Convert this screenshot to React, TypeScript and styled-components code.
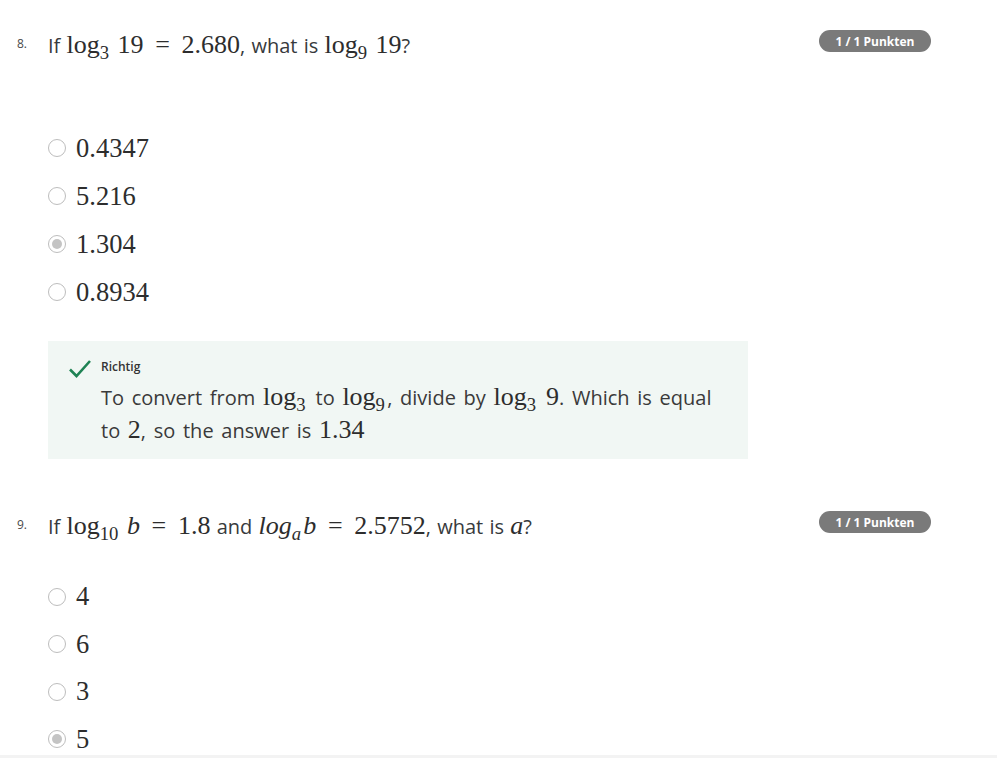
import styled, { createGlobalStyle } from "styled-components";

const GlobalStyle = createGlobalStyle`
  body {
    margin: 0;
    background: #ffffff;
    font-family: "Open Sans", "Liberation Sans", sans-serif;
    color: #373a3c;
  }
`;

const Page = styled.div`
  display: flex;
  flex-direction: column;
  height: 758px;
  padding-right: 66px;
  border-bottom: 3px solid #f3f3f3;
  box-sizing: border-box;
  overflow: hidden;
`;

const Question = styled.section<{ $top: number }>`
  display: grid;
  grid-template-columns: 31px 1fr auto;
  margin-top: ${(p) => p.$top}px;
  padding-left: 17px;
`;

const Number = styled.span`
  font-size: 12px;
  color: #4a4a4a;
  padding-top: 5px;
`;

const Body = styled.div`
  display: flex;
  flex-direction: column;
`;

const Prompt = styled.div`
  font-size: 20px;
  line-height: 30px;
  height: 30px;
  white-space: nowrap;
  word-spacing: 1px;
`;

const Badge = styled.span`
  display: inline-flex;
  align-items: center;
  justify-content: center;
  width: 112px;
  height: 22px;
  border-radius: 11px;
  background: #7a7a7a;
  color: #ffffff;
  font-size: 12px;
  font-weight: 700;
`;

const Options = styled.ul<{ $top: number }>`
  list-style: none;
  margin: ${(p) => p.$top}px 0 0;
  padding: 0;
  display: flex;
  flex-direction: column;
`;

const Option = styled.li<{ $h: number }>`
  display: flex;
  align-items: center;
  height: ${(p) => p.$h}px;
  gap: 10px;
`;

const Radio = styled.span<{ $checked?: boolean }>`
  width: 16px;
  height: 16px;
  border-radius: 50%;
  border: 1.5px solid #bdbdbd;
  display: inline-flex;
  align-items: center;
  justify-content: center;
  flex-shrink: 0;
  &::after {
    content: "";
    width: 10px;
    height: 10px;
    border-radius: 50%;
    background: ${(p) => (p.$checked ? "#c4c4c4" : "transparent")};
  }
`;

const M = styled.span`
  font-family: "Liberation Serif", "DejaVu Serif", serif;
  font-size: 1.3em;
  font-style: normal;
  color: #2d2d2d;
  word-spacing: 0;
`;

const MI = styled.i`
  font-family: "Liberation Serif", serif;
`;

const Rel = styled.span`
  margin: 0 0.2em;
`;

const Sub = styled.sub`
  font-size: 0.72em;
  vertical-align: -0.3em;
  line-height: 0;
  margin-right: 0.12em;
`;

const Val = styled(M)`
  font-size: 26.5px;
`;

const Feedback = styled.div`
  width: 700px;
  margin-top: 25px;
  padding: 17px 20px 14px 20px;
  box-sizing: border-box;
  height: 118px;
  background: #f1f7f4;
  display: grid;
  grid-template-columns: 33px 1fr;
`;

const Check = styled.svg`
  width: 24px;
  height: 20px;
  margin-top: 1px;
`;

const Verdict = styled.div`
  font-size: 12px;
  font-weight: 600;
  color: #333333;
  line-height: 18px;
`;

const Explanation = styled.p`
  margin: 5px 0 0;
  font-size: 20px;
  line-height: 32px;
  word-spacing: 2.5px;
  color: #3a3a3a;
`;

const Log = ({ base }: { base: string }) => (
  <M>
    log<Sub>{base}</Sub>
  </M>
);

const App = () => (
  <Page>
    <GlobalStyle />
    <Question $top={30}>
      <Number>8.</Number>
      <Body>
        <Prompt>
          If <Log base="3" /> <M>19 <Rel>=</Rel> 2.680</M>, what is <Log base="9" /> <M>19</M>?
        </Prompt>
        <Options $top={64}>
          {["0.4347", "5.216", "1.304", "0.8934"].map((v) => (
            <Option key={v} $h={48}>
              <Radio $checked={v === "1.304"} />
              <Val>{v}</Val>
            </Option>
          ))}
        </Options>
        <Feedback>
          <Check viewBox="0 0 24 20">
            <path d="M2 10.5 L8.5 17 L22 2" fill="none" stroke="#1f8354" strokeWidth="2.6" />
          </Check>
          <div>
            <Verdict>Richtig</Verdict>
            <Explanation>
              To convert from <Log base="3" /> to <Log base="9" />, divide by <Log base="3" /> <M>9</M>. Which is equal
              to <M>2</M>, so the answer is <M>1.34</M>
            </Explanation>
          </div>
        </Feedback>
      </Body>
      <Badge>1 / 1 Punkten</Badge>
    </Question>
    <Question $top={52}>
      <Number>9.</Number>
      <Body>
        <Prompt>
          If <Log base="10" /> <M><MI>b</MI> <Rel>=</Rel> 1.8</M> and{" "}
          <M>
            <MI>log</MI>
            <Sub>
              <MI>a</MI>
            </Sub>
            <MI>b</MI> <Rel>=</Rel> 2.5752
          </M>
          , what is <M><MI>a</MI></M>?
        </Prompt>
        <Options $top={32}>
          {["4", "6", "3", "5"].map((v) => (
            <Option key={v} $h={47.5}>
              <Radio $checked={v === "5"} />
              <Val>{v}</Val>
            </Option>
          ))}
        </Options>
      </Body>
      <Badge>1 / 1 Punkten</Badge>
    </Question>
  </Page>
);

export default App;
